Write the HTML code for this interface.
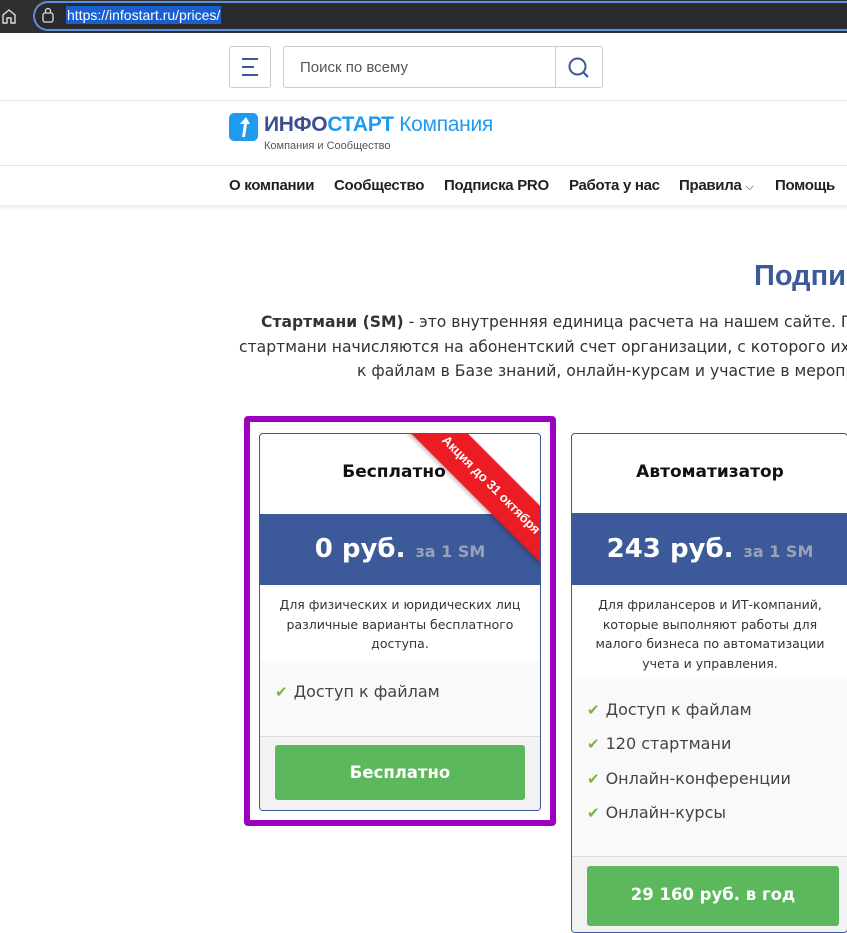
<!DOCTYPE html>
<html><head><meta charset="utf-8"><style>
*{box-sizing:border-box;margin:0;padding:0}
body{width:847px;height:912px;overflow:hidden;background:#fff;font-family:"Liberation Sans","DejaVu Sans",sans-serif;position:relative;color:#333}
.abs{position:absolute}
.bar{left:0;top:0;width:847px;height:33px;background:#2f2f2f}
.url{left:33px;top:1px;width:814px;height:30px;border:2px solid #5d8fe0;border-right:none;border-radius:16px 0 0 16px;background:#2a2a2a}
.nav a{position:absolute;top:177px;font-size:15px;font-weight:bold;color:#222;letter-spacing:-0.3px}
.card{position:absolute;border:1px solid #3b5998;border-radius:4px;overflow:hidden;background:#fff;font-family:"DejaVu Sans",sans-serif}
.band{position:absolute;left:0;right:0;background:#3c5a99;color:#fff;text-align:center;font-weight:bold}
.band span{font-size:16px;color:#9aa3b5;margin-left:10px}
.desc{position:absolute;left:0;right:0;text-align:center;font-size:12.5px;line-height:19.5px;color:#333}
.li{position:absolute;font-size:16px;color:#444}
.li:before{content:"✔";color:#7cb342;font-size:15px;margin-right:6px}
.btn{position:absolute;background:#5cb85c;border-radius:3px;color:#fff;font-weight:bold;font-size:16.5px;text-align:center}
.p{position:absolute;font-family:"DejaVu Sans",sans-serif;font-size:15.6px;white-space:nowrap}
</style></head><body>
<div class="abs bar"></div>
<div class="abs url"></div>
<svg class="abs" style="left:0;top:7px" width="18" height="18" viewBox="0 0 18 18"><path d="M3 16V8l6-5 6 5v8h-4v-5H7v5z" fill="none" stroke="#ddd" stroke-width="1.4"/></svg>
<svg class="abs" style="left:41px;top:7px" width="14" height="16" viewBox="0 0 14 16"><rect x="2" y="6" width="10" height="9" rx="2" fill="none" stroke="#ddd" stroke-width="1.3"/><path d="M4.5 6V4a2.5 2.5 0 0 1 5 0v2" fill="none" stroke="#ddd" stroke-width="1.3"/></svg>
<div class="abs" style="left:66px;top:6px;height:18px;padding:0 1px;background:#1a5fd0;color:#fff;font-size:14px;line-height:18px">https://infostart.ru/prices/</div>

<div class="abs" style="left:229px;top:46px;width:42px;height:42px;border:1px solid #ccc;border-radius:3px"></div>
<div class="abs" style="left:242px;top:58px;width:16px;height:2px;background:#3b5998"></div>
<div class="abs" style="left:242px;top:66px;width:12px;height:2px;background:#3b5998"></div>
<div class="abs" style="left:242px;top:74px;width:16px;height:2px;background:#3b5998"></div>
<div class="abs" style="left:283px;top:46px;width:320px;height:42px;border:1px solid #ccc;border-radius:3px"></div>
<div class="abs" style="left:555px;top:47px;width:1px;height:40px;background:#ccc"></div>
<div class="abs" style="left:300px;top:59px;font-size:15px;color:#555">Поиск по всему</div>
<svg class="abs" style="left:567px;top:56px" width="24" height="24" viewBox="0 0 24 24"><circle cx="10.5" cy="10.5" r="8" fill="none" stroke="#3b5998" stroke-width="2"/><path d="M16 16l5 5" stroke="#3b5998" stroke-width="2.2"/></svg>
<div class="abs" style="left:0;top:100px;width:847px;height:1px;background:#e4e4e4"></div>

<div class="abs" style="left:229px;top:113px;width:29px;height:28px;background:#1e9bf0;border-radius:5px"></div>
<svg class="abs" style="left:229px;top:113px" width="29" height="28" viewBox="0 0 29 28"><path d="M13 24l2-13h-4l6-7 4 7h-3l-2 13z" fill="#fff"/></svg>
<div class="abs" style="left:264px;top:113px;font-size:21px;font-weight:bold;color:#3b4f8f;letter-spacing:-0.3px">ИНФО<span style="color:#1e9bf0">СТАРТ</span> <span style="font-weight:normal;color:#1e9bf0">Компания</span></div>
<div class="abs" style="left:264px;top:140px;font-size:11px;color:#555">Компания и Сообщество</div>
<div class="abs" style="left:0;top:165px;width:847px;height:1px;background:#e4e4e4"></div>
<div class="nav">
<a style="left:229px">О компании</a><a style="left:334px">Сообщество</a><a style="left:444px">Подписка PRO</a><a style="left:569px">Работа у нас</a><a style="left:679px">Правила <span style="font-weight:normal;font-size:11px">⌵</span></a><a style="left:775px">Помощь</a>
</div>
<div class="abs" style="left:0;top:205px;width:847px;height:6px;background:linear-gradient(#ececec,#fff)"></div>

<div class="abs" style="left:754px;top:260px;font-size:29px;font-weight:bold;color:#3b5998;white-space:nowrap">Подписка</div>
<div class="p" style="left:261px;top:313px"><b>Стартмани (SM)</b> - это внутренняя единица расчета на нашем сайте. П</div>
<div class="p" style="left:239px;top:338px">стартмани начисляются на абонентский счет организации, с которого их</div>
<div class="p" style="left:357px;top:362px">к файлам в Базе знаний, онлайн-курсам и участие в меропр</div>

<div class="abs" style="left:244px;top:416px;width:312px;height:410px;border:6px solid #9b00bf;border-radius:4px"></div>

<div class="card" style="left:259px;top:433px;width:282px;height:378px">
<div class="abs" style="left:0;top:28px;width:100%;text-align:center;font-size:17px;font-weight:bold;color:#111;padding-right:12px">Бесплатно</div>
<div class="band" style="top:80px;height:71px;line-height:71px;font-size:26px">0 руб.<span>за 1 SM</span></div>
<div class="desc" style="top:161px">Для физических и юридических лиц<br>различные варианты бесплатного<br>доступа.</div>
<div class="abs" style="left:0;top:227px;width:100%;height:75px;background:#f9f9f9"></div>
<div class="li" style="left:15px;top:248px">Доступ к файлам</div>
<div class="abs" style="left:0;top:302px;width:100%;height:76px;background:#f2f2f2;border-top:1px solid #ddd"></div>
<div class="btn" style="left:15px;top:311px;width:250px;height:55px;line-height:55px">Бесплатно</div>
<div class="abs" style="left:111px;top:31px;width:240px;height:40px;background:#ec1c24;transform:rotate(45deg);color:#fff;font-weight:bold;font-size:13px;text-align:center;line-height:40px;box-shadow:0 2px 4px rgba(0,0,0,.3);font-family:'Liberation Sans',sans-serif">Акция до 31 октября</div>
</div>

<div class="card" style="left:571px;top:433px;width:277px;height:500px">
<div class="abs" style="left:0;top:28px;width:276px;text-align:center;font-size:17px;font-weight:bold;color:#111">Автоматизатор</div>
<div class="band" style="top:79px;height:72px"></div>
<div class="abs" style="left:0;top:79px;width:276px;height:72px;line-height:72px;text-align:center;color:#fff;font-weight:bold;font-size:26px">243 руб.<span style="font-size:16px;color:#9aa3b5;margin-left:10px">за 1 SM</span></div>
<div class="desc" style="top:161px;width:276px;right:auto">Для фрилансеров и ИТ-компаний,<br>которые выполняют работы для<br>малого бизнеса по автоматизации<br>учета и управления.</div>
<div class="abs" style="left:0;top:245px;width:100%;height:177px;background:#f9f9f9"></div>
<div class="li" style="left:15px;top:266px">Доступ к файлам</div>
<div class="li" style="left:15px;top:300px">120 стартмани</div>
<div class="li" style="left:15px;top:335px">Онлайн-конференции</div>
<div class="li" style="left:15px;top:369px">Онлайн-курсы</div>
<div class="abs" style="left:0;top:422px;width:100%;height:80px;background:#f2f2f2;border-top:1px solid #ddd"></div>
<div class="btn" style="left:15px;top:432px;width:252px;height:60px;line-height:57px">29 160 руб. в год</div>
</div>
</body></html>
